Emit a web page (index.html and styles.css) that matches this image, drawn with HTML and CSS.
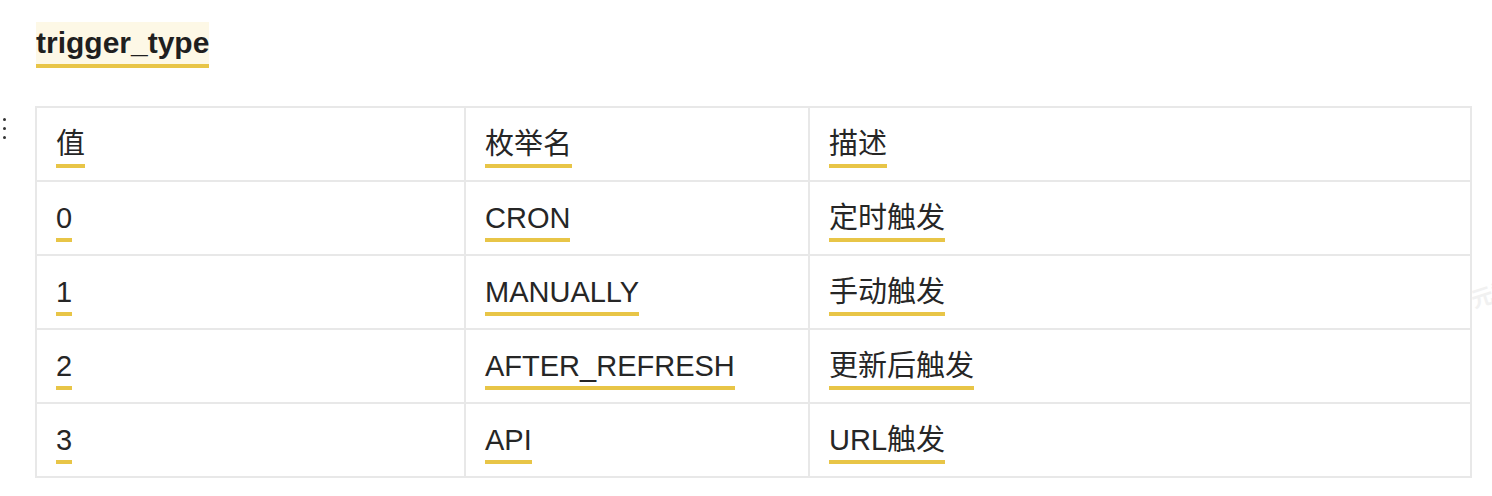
FILE: index.html
```html
<!DOCTYPE html>
<html lang="zh">
<head>
<meta charset="utf-8">
<title>trigger_type</title>
<link rel="stylesheet" href="styles.css">
</head>
<body>
<div class="page">
  <h2 class="title"><span class="mark">trigger_type</span></h2>
  <div class="block">
    <div class="handle"><i></i><i></i><i></i></div>
    <div class="tbl">
      <div class="cell"><span class="u">值</span></div>
      <div class="cell"><span class="u">枚举名</span></div>
      <div class="cell"><span class="u">描述</span></div>

      <div class="cell"><span class="u">0</span></div>
      <div class="cell"><span class="u">CRON</span></div>
      <div class="cell"><span class="u">定时触发</span></div>

      <div class="cell"><span class="u">1</span></div>
      <div class="cell"><span class="u">MANUALLY</span></div>
      <div class="cell"><span class="u">手动触发</span></div>

      <div class="cell"><span class="u">2</span></div>
      <div class="cell"><span class="u">AFTER_REFRESH</span></div>
      <div class="cell"><span class="u">更新后触发</span></div>

      <div class="cell"><span class="u">3</span></div>
      <div class="cell"><span class="u">API</span></div>
      <div class="cell"><span class="u">URL触发</span></div>
    </div>
  </div>
  <div class="watermark">元数</div>
</div>
</body>
</html>
```

FILE: styles.css
```css
html, body {
  margin: 0;
  padding: 0;
  background: #ffffff;
}

body {
  font-family: "Liberation Sans", "Noto Sans CJK SC", sans-serif;
  color: #1f1f1f;
  width: 1492px;
  height: 496px;
  overflow: hidden;
}

.page {
  position: relative;
  padding: 22px 0 0 36px;
}

.title {
  margin: 0;
  font-size: 30px;
  font-weight: 700;
  line-height: 42px;
  height: 46px;
}

.mark {
  display: inline-block;
  background: #fdf8e6;
  border-bottom: 4px solid #e8c547;
  color: #1f1f1f;
}

.block {
  position: relative;
  margin-top: 38px;
  margin-left: -1px;
}

.handle {
  position: absolute;
  left: -32px;
  top: 12px;
  display: flex;
  flex-direction: column;
  gap: 6px;
}

.handle i {
  display: block;
  width: 3px;
  height: 3px;
  border-radius: 50%;
  background: #333333;
}

.tbl {
  display: grid;
  grid-template-columns: 429px 344px 662px;
  width: 1435px;
  border-top: 2px solid #e8e8e8;
  border-left: 2px solid #e8e8e8;
}

.cell {
  border-right: 2px solid #e8e8e8;
  border-bottom: 2px solid #e8e8e8;
  padding: 18px 19px 12px 19px;
  font-size: 29px;
  line-height: 36px;
  box-sizing: border-box;
  height: 74px;
}

.u {
  display: inline-block;
  padding-bottom: 2px;
  border-bottom: 4px solid #e8c547;
  color: #262626;
}

.watermark {
  position: absolute;
  left: 1470px;
  top: 276px;
  font-size: 22px;
  font-weight: 700;
  color: #f1f1f1;
  transform: rotate(-18deg);
  white-space: nowrap;
}
```
